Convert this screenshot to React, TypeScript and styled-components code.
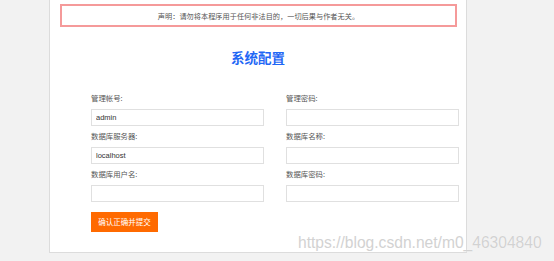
import React from "react";
import styled, { createGlobalStyle } from "styled-components";

const GlobalStyle = createGlobalStyle`
  html, body {
    margin: 0;
    padding: 0;
    background: #f2f2f2;
    font-family: "Noto Sans CJK SC", "Liberation Sans", sans-serif;
  }
`;

const Page = styled.div`
  position: relative;
  width: 554px;
  height: 261px;
  overflow: hidden;
`;

const Panel = styled.div`
  margin-left: 49px;
  width: 418px;
  height: 253px;
  box-sizing: border-box;
  background: #fff;
  border: 1px solid #dcdcdc;
  border-top: none;
  padding-top: 4px;
`;

const Notice = styled.div`
  margin: 0 9px 0 10px;
  height: 23px;
  box-sizing: border-box;
  border: 2px solid #f59a9a;
  display: flex;
  align-items: center;
  justify-content: center;
  font-size: 7.2px;
  color: #555;
`;

const Title = styled.h1`
  margin: 21px 0 0;
  height: 18px;
  line-height: 18px;
  text-align: center;
  font-size: 13.5px;
  font-weight: bold;
  color: #1f67f5;
`;

const Form = styled.form`
  margin-top: 26px;
  padding-left: 41px;
  display: grid;
  grid-template-columns: 173px 173px;
  column-gap: 22px;
`;

const Field = styled.div`
  display: flex;
  flex-direction: column;
  height: 38px;
`;

const Label = styled.label`
  height: 11px;
  line-height: 11px;
  font-size: 7.4px;
  color: #555;
`;

const Input = styled.input`
  margin-top: 6px;
  height: 17px;
  box-sizing: border-box;
  border: 1px solid #e0e0e0;
  padding: 0 4px;
  font-family: "Liberation Sans", sans-serif;
  font-size: 7.5px;
  color: #333;
  outline: none;
`;

const Submit = styled.button`
  margin-top: 5px;
  width: 67px;
  height: 20px;
  border: none;
  background: #ff6a00;
  color: #fff;
  font-family: "Noto Sans CJK SC", sans-serif;
  font-size: 7.5px;
  padding: 0;
`;

const Watermark = styled.div`
  position: absolute;
  left: 298px;
  top: 234px;
  font-family: "Liberation Sans", sans-serif;
  font-size: 15.6px;
  color: #d2d2d2;
  text-shadow: 0 0 1px #fff;
  white-space: nowrap;
`;

const fields = [
  { label: "管理帐号:", value: "admin" },
  { label: "管理密码:", value: "" },
  { label: "数据库服务器:", value: "localhost" },
  { label: "数据库名称:", value: "" },
  { label: "数据库用户名:", value: "" },
  { label: "数据库密码:", value: "" },
];

const App: React.FC = () => {
  return (
    <Page>
      <GlobalStyle />
      <Panel>
        <Notice>声明：请勿将本程序用于任何非法目的，一切后果与作者无关。</Notice>
        <Title>系统配置</Title>
        <Form onSubmit={(e) => e.preventDefault()}>
          {fields.map((f) => (
            <Field key={f.label}>
              <Label>{f.label}</Label>
              <Input defaultValue={f.value} />
            </Field>
          ))}
          <div>
            <Submit type="submit">确认正确并提交</Submit>
          </div>
        </Form>
      </Panel>
      <Watermark>https://blog.csdn.net/m0_46304840</Watermark>
    </Page>
  );
};

export default App;
